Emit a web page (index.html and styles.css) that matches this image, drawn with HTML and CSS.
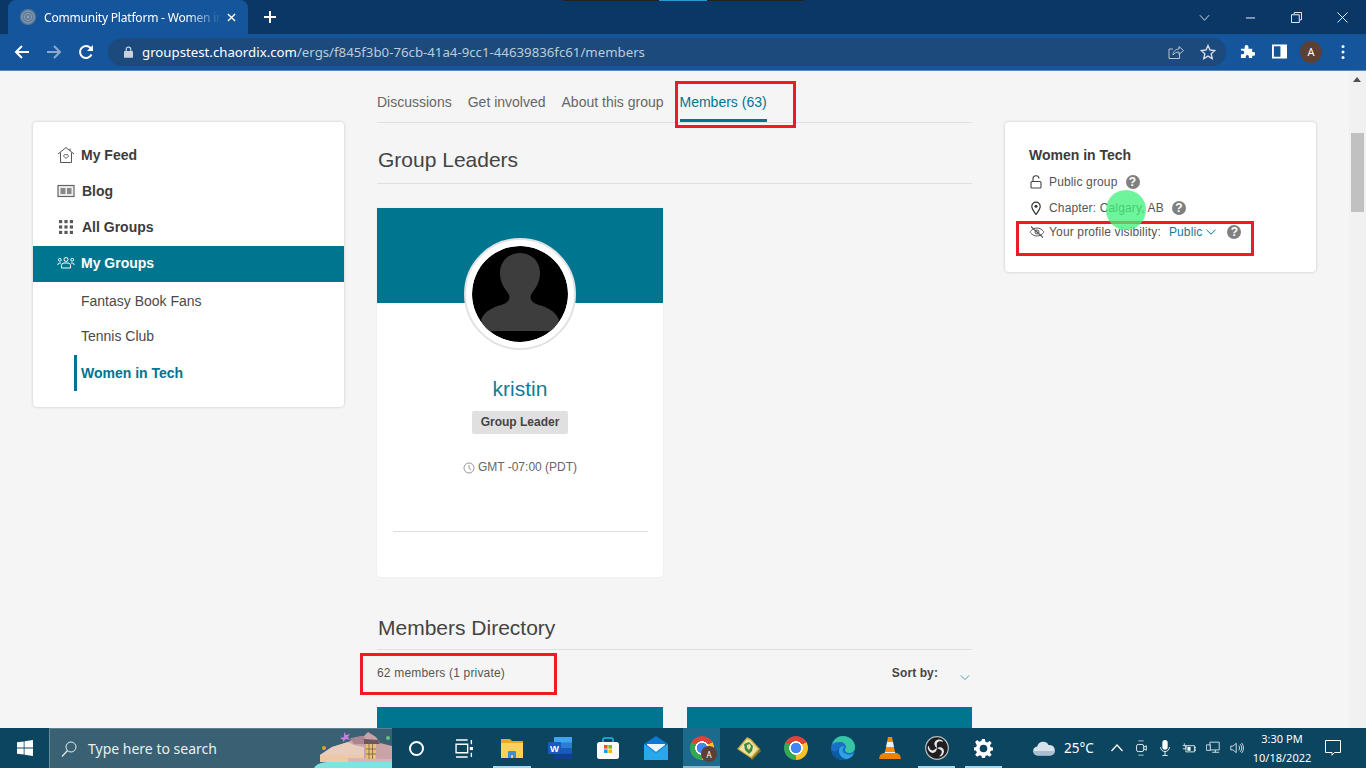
FILE: index.html
```html
<!DOCTYPE html>
<html lang="en">
<head>
<meta charset="utf-8">
<title>Community Platform - Women in Tech</title>
<link rel="stylesheet" href="styles.css">
</head>
<body>
<div class="recording-strip"><span class="rs-dark"></span><span class="rs-blue"></span><span class="rs-dark"></span></div>

<header class="tabstrip">
  <div class="tab">
    <svg class="favicon" viewBox="0 0 16 16"><circle cx="8" cy="8" r="8" fill="#5f7a97"/><circle cx="8" cy="8" r="6" fill="none" stroke="#8fa0b4" stroke-width="1"/><circle cx="8" cy="8" r="3.6" fill="none" stroke="#8fa0b4" stroke-width="1"/><circle cx="8" cy="8" r="1.4" fill="#8fa0b4"/></svg>
    <span class="tab-title">Community Platform - Women in</span>
    <svg class="tab-close" viewBox="0 0 10 10"><path d="M1 1l8 8M9 1l-8 8" stroke="#fff" stroke-width="1.5"/></svg>
  </div>
  <svg class="new-tab" viewBox="0 0 12 12"><path d="M6 0v12M0 6h12" stroke="#fff" stroke-width="2"/></svg>
  <div class="window-controls">
    <svg class="wc" viewBox="0 0 12 12"><path d="M1 3.500l5 5.500 5-5.500" fill="none" stroke="#dfe7ef" stroke-width="1"/></svg>
    <svg class="wc" viewBox="0 0 12 12"><path d="M1 6.500h10" stroke="#fff" stroke-width="1"/></svg>
    <svg class="wc" viewBox="0 0 12 12"><path d="M3.500 2.500V.5h8v8h-2M.5 3h8.500v8.500H.5z" fill="none" stroke="#fff" stroke-width="1"/></svg>
    <svg class="wc" viewBox="0 0 12 12"><path d="M.5.5l11 11M11.500.5l-11 11" stroke="#fff" stroke-width="1"/></svg>
  </div>
</header>

<nav class="toolbar">
  <svg class="nav-btn" viewBox="0 0 16 16"><path d="M15 8H2M8 2L2 8l6 6" fill="none" stroke="#fff" stroke-width="2"/></svg>
  <svg class="nav-btn" viewBox="0 0 16 16"><path d="M1 8h13M8 2l6 6-6 6" fill="none" stroke="#8eaaca" stroke-width="2"/></svg>
  <svg class="nav-btn" viewBox="0 0 16 16"><path d="M13.500 10.500A6 6 0 1 1 12.500 4L14 5.500" fill="none" stroke="#fff" stroke-width="2"/><path d="M15 1v6H9z" fill="#fff"/></svg>
  <div class="omnibox">
    <svg class="lock" viewBox="0 0 10 13"><path d="M2.500 6V3.500a2.500 2.500 0 0 1 5 0V6" fill="none" stroke="#c9d3de" stroke-width="1.300"/><rect y="5.500" width="10" height="7.500" rx="1" fill="#c9d3de"/></svg>
    <span class="url"><span class="url-host">groupstest.chaordix.com</span>/ergs/f845f3b0-76cb-41a4-9cc1-44639836fc61/members</span>
    <svg class="omni-icon" viewBox="0 0 16 16"><path d="M11.500 9.500v5H1V5h4" fill="none" stroke="#b9c5d3" stroke-width="1"/><path d="M5 11c0-4 3-6 6-6V2.500L15.500 6.500 11 10.500V8c-2.500 0-4.500 1-6 3z" fill="none" stroke="#b9c5d3" stroke-width="1"/></svg>
    <svg class="omni-icon star" viewBox="0 0 16 16"><path d="M8 1.500l2 4.500 4.800.500-3.600 3.200 1 4.800L8 12.100l-4.200 2.400 1-4.800L1.200 6.500 6 6z" fill="none" stroke="#d4dce5" stroke-width="1.400"/></svg>
  </div>
  <svg class="tool-icon" viewBox="0 0 16 16"><path d="M1 5h4V3a2 2 0 0 1 4 0v2h4v3.500h1.500a2 2 0 0 1 0 4H13V15H9.500v-1.500a1.700 1.700 0 0 0-3.400 0V15H1v-4h1.500a2 2 0 0 0 0-4H1z" fill="#fff"/></svg>
  <svg class="tool-icon" viewBox="0 0 16 16"><path d="M1 1.500h14v13H1z" fill="#14559c" stroke="#fff" stroke-width="2"/><rect x="9" y="1" width="6" height="14" fill="#fff"/></svg>
  <span class="profile">A</span>
  <svg class="menu-dots" viewBox="0 0 4 16"><circle cx="2" cy="2.500" r="1.500" fill="#fff"/><circle cx="2" cy="8" r="1.500" fill="#fff"/><circle cx="2" cy="13.500" r="1.500" fill="#fff"/></svg>
</nav>

<main class="page">
  <aside class="side-card">
    <a class="nav-row">
      <svg class="nav-ico" viewBox="0 0 18 18"><path d="M1 8l8-6.500L17 8M3.500 6.500V16.500h11V6.500M13 2.500V5" fill="none" stroke="#555" stroke-width="1"/><path d="M9 12.500L6.800 10.300a1.300 1.300 0 0 1 2.200-1.300 1.300 1.300 0 0 1 2.200 1.300z" fill="none" stroke="#555" stroke-width="1"/></svg>
      My Feed
    </a>
    <a class="nav-row nav-row-blog">
      <svg class="nav-ico" viewBox="0 0 18 18"><rect x="1" y="3.500" width="16" height="11" fill="#eee" stroke="#666" stroke-width="1.200"/><rect x="3.500" y="6" width="5" height="6" fill="#888"/><rect x="10" y="6" width="4.500" height="6" fill="#888"/></svg>
      Blog
    </a>
    <a class="nav-row nav-row-all">
      <svg class="nav-ico" viewBox="0 0 18 18"><g fill="#5a5a5a"><rect x="2" y="2" width="3.200" height="3.200"/><rect x="7.400" y="2" width="3.200" height="3.200"/><rect x="12.800" y="2" width="3.200" height="3.200"/><rect x="2" y="7.400" width="3.200" height="3.200"/><rect x="7.400" y="7.400" width="3.200" height="3.200"/><rect x="12.800" y="7.400" width="3.200" height="3.200"/><rect x="2" y="12.800" width="3.200" height="3.200"/><rect x="7.400" y="12.800" width="3.200" height="3.200"/><rect x="12.800" y="12.800" width="3.200" height="3.200"/></g></svg>
      All Groups
    </a>
    <a class="nav-row nav-row-active">
      <svg class="nav-ico" viewBox="0 0 18 18"><g fill="none" stroke="#fff" stroke-width="1"><circle cx="9" cy="5.500" r="2"/><circle cx="2.800" cy="5.800" r="1.400"/><circle cx="15.200" cy="5.800" r="1.400"/><path d="M4.500 14v-2.500a2.500 2.500 0 0 1 2.500-2.500h4a2.500 2.500 0 0 1 2.500 2.500V14zM.8 11a2 2 0 0 1 2-2H4M17.200 11a2 2 0 0 0-2-2H14"/></g></svg>
      My Groups
    </a>
    <a class="sub-row sub-row-first">Fantasy Book Fans</a>
    <a class="sub-row">Tennis Club</a>
    <a class="sub-row sub-row-active">Women in Tech</a>
  </aside>

  <section class="center">
    <div class="tabs">
      <a class="tab-link">Discussions</a>
      <a class="tab-link">Get involved</a>
      <a class="tab-link">About this group</a>
      <a class="tab-link tab-link-active">Members (63)</a>
    </div>
    <h2 class="section-title">Group Leaders</h2>
    <article class="member-card">
      <div class="banner"></div>
      <div class="avatar">
        <svg viewBox="0 0 96 96"><circle cx="48" cy="48" r="48" fill="#000"/><path d="M48 7c-11 0-20 8-20 20 0 9 4 15 8 20 3 5 1 9-4 11-10 3-19 6-23 16l5 11h68l5-11c-4-10-13-13-23-16-5-2-7-6-4-11 4-5 8-11 8-20 0-12-9-20-20-20z" fill="#3d3d3d"/></svg>
      </div>
      <div class="name">kristin</div>
      <div class="badge">Group Leader</div>
      <div class="timezone">
        <svg class="clock" viewBox="0 0 12 12"><circle cx="6" cy="6" r="5" fill="none" stroke="#999" stroke-width="1"/><path d="M6 3v3.300l2 1.400" fill="none" stroke="#999" stroke-width="1"/></svg>
        GMT -07:00 (PDT)
      </div>
      <div class="card-rule"></div>
    </article>
    <h2 class="section-title section-title-dir">Members Directory</h2>
    <div class="dir-bar">
      <span>62 members (1 private)</span>
      <span class="sort">Sort by:<svg class="sort-chev" viewBox="0 0 12 8"><path d="M1 1.500l5 5 5-5" fill="none" stroke="#4b9db5" stroke-width="1.200"/></svg></span>
    </div>
    <div class="dir-grid">
      <div class="dir-card"></div>
      <div class="dir-card"></div>
    </div>
  </section>

  <aside class="info-card">
    <h3 class="info-title">Women in Tech</h3>
    <div class="info-row info-row-public">
      <svg class="info-ico" viewBox="0 0 14 14"><path d="M4 6.500V4a3 3 0 0 1 6-.5" fill="none" stroke="#444" stroke-width="1.100"/><rect x="2" y="6.500" width="10" height="6.500" rx="1" fill="none" stroke="#444" stroke-width="1.100"/></svg>
      <span>Public group</span>
      <span class="help">?</span>
    </div>
    <div class="info-row info-row-chapter">
      <svg class="info-ico" viewBox="0 0 14 14"><path d="M7 13.500C4.500 10 2.800 8 2.800 5.300a4.200 4.200 0 0 1 8.400 0C11.200 8 9.500 10 7 13.500z" fill="none" stroke="#333" stroke-width="1.200"/><circle cx="7" cy="5.300" r="1.500" fill="#333"/></svg>
      <span>Chapter: Calgary, AB</span>
      <span class="help">?</span>
    </div>
    <div class="info-row info-row-vis">
      <svg class="info-ico info-ico-eye" viewBox="0 0 16 14"><path d="M1 7s2.500-4 7-4 7 4 7 4-2.500 4-7 4-7-4-7-4z" fill="none" stroke="#555" stroke-width="1"/><circle cx="8" cy="7" r="2" fill="none" stroke="#555" stroke-width="1"/><path d="M2 1.500l12 11" stroke="#555" stroke-width="1.100"/></svg>
      <span>Your profile visibility:</span>
      <span class="vis-val">Public<svg class="vis-chev" viewBox="0 0 10 6"><path d="M.5.8L5 5.200 9.500.8" fill="none" stroke="#00758f" stroke-width="1"/></svg></span>
      <span class="help">?</span>
    </div>
  </aside>

  <div class="scrollbar">
    <svg class="sb-arrow" viewBox="0 0 10 6"><path d="M5 0l5 6H0z" fill="#505050"/></svg>
    <div class="sb-thumb"></div>
  </div>

  <div class="mark mark-tab"></div>
  <div class="mark mark-vis"></div>
  <div class="mark mark-count"></div>
  <div class="click-dot"></div>
</main>

<footer class="taskbar">
  <div class="start">
    <svg viewBox="0 0 16 16" class="win"><path d="M0 2.300L6.700 1.400V7.600H0zM7.500 1.300L16 0V7.600H7.500zM0 8.400H6.700V14.600L0 13.700zM7.500 8.400H16V16L7.500 14.700z" fill="#fff"/></svg>
  </div>
  <div class="search">
    <svg class="search-ico" viewBox="0 0 16 16"><circle cx="10" cy="6" r="5" fill="none" stroke="#e6edf0" stroke-width="1"/><path d="M6.500 9.500L1 15.500" stroke="#e6edf0" stroke-width="1.200"/></svg>
    <span class="search-text">Type here to search</span>
    <svg class="search-art" viewBox="0 0 78 39">
      <path d="M0 39c2-4 8-6 16-6h62v6z" fill="#7fe3e4"/>
      <path d="M6 33V26L18 18 34 13 42 8 50 7 54 3 62 8 66 14 78 17V33z" fill="#c9a3a6"/>
      <path d="M18 18L34 13 40 16 50 18V26H6z" fill="#e8cdbd"/>
      <path d="M36 9L50 7 52 15 40 15z" fill="#a98792"/>
      <path d="M50 10L64 11 66 15H50z" fill="#6d5660"/>
      <path d="M6 26H50V33H6z" fill="#eec9a6"/>
      <path d="M34 29L78 30V33H34z" fill="#d9b0bd"/>
      <path d="M52 15H62V30H52z" fill="#e8c27a"/>
      <path d="M55 15V30M58.500 15V30M52 20H62M52 25H62" stroke="#6b5246" stroke-width=".7"/>
      <path d="M30 3l2 3 4-1-2 3 2 3-4-1-3 3V11L26 9l4-1z" fill="#c97be0"/>
      <circle cx="10" cy="19" r="2" fill="#e0a326"/>
      <circle cx="74" cy="9" r="2" fill="#5ac77c"/>
    </svg>
  </div>
  <div class="apps">
    <div class="app"><span class="cortana"></span></div>
    <div class="app">
      <svg class="app-ico-20" viewBox="0 0 18 18"><path d="M1 1h11M1 17h11M1 5h11v8H1z" fill="none" stroke="#fff" stroke-width="1.300"/><path d="M15.500 1v4M15.500 13v4" stroke="#fff" stroke-width="1.300"/><rect x="14" y="7.500" width="3" height="3" fill="#fff"/></svg>
    </div>
    <div class="app app-open">
      <svg class="app-ico" viewBox="0 0 24 24"><path d="M1 3h9l2 2h11v17H1z" fill="#e6a91f"/><path d="M1 7h22v15H1z" fill="#fbd35a"/><path d="M8 22v-6a1 1 0 0 1 1-1h6a1 1 0 0 1 1 1v6h-3v-3h-2v3z" fill="#3d8fd1"/></svg>
    </div>
    <div class="app">
      <svg class="app-ico" viewBox="0 0 24 24"><rect x="6" y="1" width="18" height="22" rx="1" fill="#2b7cd3"/><rect x="6" y="1" width="18" height="5.500" fill="#41a5ee"/><rect x="6" y="12" width="18" height="5.500" fill="#185abd"/><rect x="6" y="17.500" width="18" height="5.500" fill="#103f91"/><rect x="0" y="6" width="13" height="12" rx="1" fill="#185abd"/><text x="6.500" y="15.800" class="word-w">W</text></svg>
    </div>
    <div class="app">
      <svg class="app-ico" viewBox="0 0 24 24"><path d="M7 7V3.500A1.500 1.500 0 0 1 8.500 2h7A1.500 1.500 0 0 1 17 3.500V7" fill="none" stroke="#29b6e6" stroke-width="1.600"/><rect x="1" y="6" width="22" height="17" rx="2.500" fill="#fbfbfb"/><rect x="8" y="9" width="3.600" height="3.600" fill="#f25022"/><rect x="12.400" y="9" width="3.600" height="3.600" fill="#7fba00"/><rect x="8" y="13.400" width="3.600" height="3.600" fill="#00a4ef"/><rect x="12.400" y="13.400" width="3.600" height="3.600" fill="#ffb900"/></svg>
    </div>
    <div class="app">
      <svg class="app-ico" viewBox="0 0 24 24"><path d="M0 8l12-8 12 8v16H0z" fill="#0f78d4"/><path d="M0 8l12 9 12-9v16H0z" fill="#28a8ea"/><path d="M3 8h18v1l-9 7-9-7z" fill="#e9f6fd"/></svg>
    </div>
    <div class="app app-b app-active">
      <span class="chrome"></span>
      <span class="chrome-badge">A</span>
    </div>
    <div class="app app-b">
      <svg class="app-ico" viewBox="0 0 24 24"><path d="M0 13L10 1l4 2 9 10-8 10z" fill="#c9a93c"/><path d="M2 13L10 3l3 1 8 9-7 8z" fill="#efe3a0"/><path d="M7 8l5-2 4 4-1 5-3 3-4-4z" fill="#3c8a4a"/><path d="M10 9l3-1 1 3-2 3-2-2z" fill="#e8e0a0"/><path d="M14 23l9-10 1 2-9 9z" fill="#8a7420"/></svg>
    </div>
    <div class="app app-b"><span class="chrome"></span></div>
    <div class="app app-b">
      <svg class="app-ico" viewBox="0 0 24 24"><circle cx="12" cy="12" r="12" fill="#1a6fc4"/><path d="M1 9C3 3 7 0 12 0c7 0 12 5 12 11 0 4-3 6-6 6-2 0-4-1-4-3 0-1 1-2 1-3 0-3-3-5-6-5C5 6 2 7 1 9z" fill="#37c6a4"/><path d="M8 13c0 5 3 9 8 10-1 .7-3 1-4 1C5 24 0 19 0 12c2 6 5 3 8 1z" fill="#0c59a4"/><path d="M13 10c-3 0-5 2-5 5 0 4 3 8 8 8 4-1 6-3 7-6-2 2-5 2-8 1-3-1-4-3-3-5 .3-1 1-2 1-3z" fill="#2ea3e3"/></svg>
    </div>
    <div class="app app-b">
      <svg class="app-ico" viewBox="0 0 24 24"><path d="M10 1h4l1 5H9z" fill="#ff8800"/><path d="M9 6h6l1 5H8z" fill="#f2f2f2"/><path d="M8 11h8l1 5H7z" fill="#ff8800"/><path d="M7 16h10l1 3H6z" fill="#f2f2f2"/><path d="M2 19l3-2h14l3 2 1 4H1z" fill="#f08000"/></svg>
    </div>
    <div class="app app-b app-open">
      <svg class="app-ico" viewBox="0 0 24 24"><circle cx="12" cy="12" r="11.300" fill="#1f1f22" stroke="#b7bcbf" stroke-width="1.200"/><g fill="#e8e8e8"><path d="M12 12C9 10 8 6 12 4c3-1 6 0 6 2-2-1-5-1-6 1-.5 1 0 3 0 5z"/><path d="M12 12C9 10 8 6 12 4c3-1 6 0 6 2-2-1-5-1-6 1-.5 1 0 3 0 5z" transform="rotate(120 12 12)"/><path d="M12 12C9 10 8 6 12 4c3-1 6 0 6 2-2-1-5-1-6 1-.5 1 0 3 0 5z" transform="rotate(240 12 12)"/></g></svg>
    </div>
    <div class="app app-b app-open">
      <svg class="app-ico-20" viewBox="0 0 20 20"><path d="M8.500 0h3l.5 3 2 .8 2.500-1.800 2.100 2.100L16.800 6.600l.8 2 2.400.4v3l-2.400.4-.8 2 1.800 2.300-2.100 2.100-2.500-1.800-2 .8-.5 3h-3l-.5-3-2-.8L3.300 18.700 1.200 16.600 3 14.300l-.8-2-2.200-.4v-3l2.200-.4.800-2L1.200 3.100 3.300 1l2.300 1.800 2-.8z" fill="#fff"/><circle cx="10" cy="10" r="4" fill="#0b4560"/></svg>
    </div>
  </div>
  <div class="tray">
    <svg class="cloud" viewBox="0 0 24 16"><path d="M6 15.500a4.500 4.500 0 0 1-.7-9A6 6 0 0 1 16.500 5a5.300 5.300 0 0 1 2 10.500z" fill="#d7e2ea"/><path d="M1.500 11h21.500a5 5 0 0 1-4.500 4.500H6A5 5 0 0 1 1.500 11z" fill="#a9bfd0"/></svg>
    <span class="temp">25°C</span>
    <svg class="tray-ico tray-caret" viewBox="0 0 14 14"><path d="M1.500 10L7 4l5.500 6" fill="none" stroke="#fff" stroke-width="1.200"/></svg>
    <svg class="tray-ico" viewBox="0 0 14 18"><path d="M4 1h6M4 17h6" stroke="#c8d4da" stroke-width="1"/><rect x="2" y="5" width="8" height="8" rx="2" fill="none" stroke="#fff" stroke-width="1"/><path d="M10 8l3-1.500v5L10 10" fill="none" stroke="#fff" stroke-width="1"/></svg>
    <svg class="tray-ico" viewBox="0 0 14 18"><rect x="4" y="0" width="6" height="11" rx="3" fill="#fff"/><path d="M2 8a5 5 0 0 0 10 0M7 13v4M4 17.500h6" fill="none" stroke="#fff" stroke-width="1"/></svg>
    <svg class="tray-ico" viewBox="0 0 18 14"><path d="M5 4h11v8H5zM16 6h2v4h-2M1 8h4M3 1v3M1 4h4v4" fill="none" stroke="#fff" stroke-width="1"/><rect x="7" y="5.500" width="4" height="5" fill="#fff"/></svg>
    <svg class="tray-ico" viewBox="0 0 18 16"><path d="M5 .5h12v10H5zM8 13.500h9M12 10.500v3" fill="none" stroke="#fff" stroke-width="1"/><path d="M.5 4h5v7h-5z" fill="#0b4560" stroke="#fff" stroke-width="1"/></svg>
    <svg class="tray-ico" viewBox="0 0 18 16"><path d="M1 5.500h3L8 2v12L4 10.500H1zM11 5a4 4 0 0 1 0 6M13 3a7 7 0 0 1 0 10M15 1.500a10 10 0 0 1 0 13" fill="none" stroke="#fff" stroke-width="1"/></svg>
    <div class="clock-time"><span>3:30 PM</span><span>10/18/2022</span></div>
    <svg class="notify" viewBox="0 0 16 16"><path d="M.5.500h15v12h-6L7 15.200V12.500H.5z" fill="none" stroke="#fff" stroke-width="1"/></svg>
  </div>
</footer>
</body>
</html>
```
FILE: styles.css
```css
* { box-sizing: border-box; }
html, body { margin: 0; padding: 0; height: 100%; overflow: hidden; }
body {
  width: 1366px; height: 768px; position: relative;
  display: flex; flex-direction: column;
  font-family: "Liberation Sans", Arial, sans-serif;
  background: #f5f5f5; color: #444;
}
a { color: inherit; text-decoration: none; }
h2, h3 { margin: 0; font-weight: normal; }

.recording-strip { position: absolute; top: 0; left: 563px; display: flex; height: 1px; z-index: 3; }
.rs-dark { width: 96px; background: #222; }
.rs-dark:last-child { width: 97px; }
.rs-blue { width: 48px; background: #2b95d6; }

/* Browser chrome */
.tabstrip { height: 34px; flex: none; background: #0b3766; display: flex; align-items: center; position: relative; }
.tab {
  margin-left: 8px; width: 240px; height: 34px; background: #14559c; flex: none;
  border-radius: 8px 8px 0 0; display: flex; align-items: center; padding-left: 12px;
}
.favicon { width: 16px; height: 16px; flex: none; }
.tab-title {
  margin-left: 8px; width: 183px; white-space: nowrap;
  font: 12px "Noto Sans", sans-serif; letter-spacing: -.2px; color: #fff;
  -webkit-mask-image: linear-gradient(to right, #000 78%, transparent 97%);
  mask-image: linear-gradient(to right, #000 78%, transparent 97%);
}
.tab-close { width: 9px; height: 9px; flex: none; }
.new-tab { width: 12px; height: 12px; margin-left: 16px; }
.window-controls { margin-left: auto; display: flex; align-items: center; gap: 35px; height: 34px; padding-right: 18px; }
.wc { width: 11px; height: 11px; }

.toolbar { height: 37px; flex: none; background: #14559c; border-bottom: 1px solid #5c88bb; display: flex; align-items: center; padding-bottom: 1px; }
.nav-btn { width: 16px; height: 16px; margin-left: 14px; margin-right: 2px; }
.omnibox {
  margin-left: 12px; width: 1118px; height: 28px; border-radius: 14px; background: #1c4a7c; flex: none;
  display: flex; align-items: center; padding-left: 16px;
}
.lock { width: 9px; height: 12px; flex: none; }
.url { margin-left: 9px; font: 13.240px "Noto Sans", sans-serif; color: #bccad9; white-space: nowrap; }
.url-host { color: #fff; }
.omni-icon { width: 16px; height: 16px; flex: none; margin-left: auto; }
.star { margin-left: 16px; margin-right: 10px; }
.tool-icon { width: 15px; height: 15px; margin-left: 14px; flex: none; }
.tool-icon + .tool-icon { margin-left: 17px; }
.profile {
  margin-left: 13px; width: 22px; height: 22px; border-radius: 50%; background: #5c4033; flex: none;
  color: #fff; font: 11px "Noto Sans", sans-serif; display: flex; align-items: center; justify-content: center;
}
.menu-dots { width: 4px; height: 16px; margin-left: 19px; flex: none; }

/* Page */
.page { flex: none; height: 657px; display: flex; align-items: flex-start; position: relative; overflow: hidden; background: #f5f5f5; }
.side-card {
  margin: 51px 0 0 33px; width: 311px; height: 285px; padding-top: 15px; flex: none;
  background: #fff; border-radius: 4px; box-shadow: 0 0 3px rgba(0,0,0,.2);
}
.nav-row { height: 36px; display: flex; align-items: center; padding-left: 24px; font-size: 14px; font-weight: bold; color: #3c3c3c; }
.nav-row-active { background: #00758f; color: #fff; margin-top: 1px; padding-bottom: 2px; }
.nav-ico { width: 18px; height: 18px; margin-right: 6px; flex: none; }
.nav-row-blog .nav-ico { margin-right: 7px; }
.nav-row-all .nav-ico { margin-right: 7px; }
.sub-row { height: 35px; display: flex; align-items: center; padding-left: 48px; font-size: 14px; color: #4a4a4a; }
.sub-row-first { margin-top: 1.500px; }
.sub-row-active { height: 36px; margin-left: 41px; padding-left: 4px; border-left: 3px solid #00758f; color: #00758f; font-weight: bold; margin-top: 1.500px; }

.center { margin-left: 33px; width: 595px; flex: none; }
.tabs { height: 52px; border-bottom: 1px solid #e0e0e0; display: flex; gap: 16px; align-items: flex-end; }
.tab-link { height: 50px; padding-top: 22px; font-size: 14px; color: #666; }
.tab-link-active { color: #00758f; border-bottom: 3px solid #00758f; }
.section-title { font-size: 21px; color: #444; height: 61px; padding: 24px 0 0 1px; line-height: 26px; border-bottom: 1px solid #dfdfdf; }
.section-title-dir { margin-top: 26px; height: 47px; padding-top: 12px; }

.member-card {
  margin-top: 24px; width: 286px; height: 369px; background: #fff; position: relative;
  box-shadow: 0 0 2px rgba(0,0,0,.08); text-align: center; border-radius: 0 0 4px 4px;
}
.banner { height: 95px; background: #00758f; }
.avatar {
  position: absolute; left: 87px; top: 30px; width: 112px; height: 112px; border-radius: 50%;
  background: #fff; border: 2px solid #e2e2e2; padding: 6px;
}
.avatar svg { width: 96px; height: 96px; display: block; border-radius: 50%; }
.name { margin-top: 72px; font-size: 21px; line-height: 28px; color: #0f7c98; }
.badge {
  margin: 8px auto 0; width: 96px; height: 23px; line-height: 22px; background: #e0e0e0; border-radius: 2px;
  font-size: 12px; font-weight: bold; color: #444;
}
.timezone { margin-top: 26px; font-size: 12px; line-height: 14px; color: #666; display: flex; justify-content: center; align-items: center; gap: 3px; }
.clock { width: 12px; height: 12px; margin-top: 2px; }
.card-rule { margin: 57px 15px 0 16px; border-top: 1px solid #ddd; }

.dir-bar { height: 57px; display: flex; justify-content: space-between; font-size: 12px; letter-spacing: .18px; color: #555; padding-top: 16px; }
.sort { font-weight: bold; color: #444; position: relative; padding-right: 34px; letter-spacing: .1px; }
.sort-chev { position: absolute; right: 2px; top: 8px; width: 10px; height: 7px; }
.dir-grid { display: flex; gap: 24px; }
.dir-card { width: 286px; height: 100px; background: #00758f; }
.dir-card:last-child { width: 285px; }

.info-card {
  margin: 51px 0 0 33px; width: 311px; height: 150px; padding: 25px 24px 0 24px; flex: none;
  background: #fff; border-radius: 4px; box-shadow: 0 0 3px rgba(0,0,0,.2);
}
.info-title { font-size: 14px; font-weight: bold; color: #3c3c3c; line-height: 16px; }
.info-row { display: flex; align-items: center; font-size: 12px; letter-spacing: .15px; color: #555; height: 16px; }
.info-row-public { margin-top: 11px; }
.info-row-chapter { margin-top: 10px; }
.info-row-vis { margin-top: 8px; }
.info-ico { width: 14px; height: 14px; margin-right: 6px; flex: none; }
.info-ico-eye { width: 16px; margin-right: 4px; }
.help {
  width: 14px; height: 14px; border-radius: 50%; background: #808080; color: #fff;
  font-size: 12px; font-weight: bold; line-height: 14px; text-align: center; margin-left: 8px; flex: none; letter-spacing: 0;
}
.vis-val { color: #0f7c98; margin-left: 8px; display: flex; align-items: center; }
.vis-chev { width: 10px; height: 6px; margin-left: 4px; }
.vis-val + .help { margin-left: 11px; }

.scrollbar { margin-left: auto; width: 17px; height: 657px; background: #f1f1f1; position: relative; flex: none; }
.sb-arrow { position: absolute; left: 4px; top: 6px; width: 8px; height: 5px; }
.sb-thumb { position: absolute; left: 2px; top: 62px; width: 13px; height: 79px; background: #c1c1c1; }

.mark { position: absolute; border: 3px solid #ed1c24; pointer-events: none; }
.mark-tab { left: 675px; top: 10px; width: 121px; height: 47px; }
.mark-vis { left: 1016px; top: 150px; width: 238px; height: 35px; }
.mark-count { left: 360px; top: 582px; width: 197px; height: 42px; }
.click-dot { position: absolute; left: 1106px; top: 119px; width: 40px; height: 40px; border-radius: 50%; background: rgba(61,241,123,.75); }

/* Windows taskbar */
.taskbar { height: 40px; flex: none; background: #0b4560; display: flex; align-items: stretch; }
.start { width: 49px; display: flex; align-items: center; justify-content: center; flex: none; }
.win { width: 16px; height: 16px; }
.search {
  width: 343px; flex: none; background: #3a6073; border-top: 1px solid #5f7f8e; border-left: 1px solid #6d8b99;
  display: flex; align-items: center; position: relative; overflow: hidden;
}
.search-ico { width: 16px; height: 16px; margin-left: 11px; }
.search-text { margin-left: 11px; font: 14px "Noto Sans", sans-serif; color: #e9eff2; }
.search-art { position: absolute; right: 0; bottom: 0; width: 78px; height: 39px; }
.apps { display: flex; flex: none; }
.app { width: 48px; flex: none; display: flex; align-items: center; justify-content: center; position: relative; }
.app-b { width: 47px; }
.app-ico { width: 24px; height: 24px; position: relative; }
.app-ico-20 { width: 19px; height: 19px; }
.app-open::after { content: ""; position: absolute; left: 5px; right: 5px; bottom: 0; height: 2px; background: #a6d8ec; }
.app-active { margin-left: -2px; }
.app-active::before { content: ""; position: absolute; left: 5px; width: 37px; top: 0; bottom: 0; background: #1c6a8c; border-bottom: 2px solid #8ab8c8; }
.cortana { width: 15px; height: 15px; border-radius: 50%; border: 2px solid #fff; }
.word-w { font: bold 9.500px "Liberation Sans", sans-serif; fill: #fff; text-anchor: middle; }
.chrome {
  width: 24px; height: 24px; border-radius: 50%; display: block; position: relative;
  background:
    radial-gradient(circle, #4285f4 0 5px, #fff 5.400px 6.600px, transparent 7px),
    conic-gradient(from 300deg, #dc4437 0 120deg, #fbc02d 120deg 240deg, #36a852 240deg 360deg);
}
.chrome-badge {
  position: absolute; left: 23px; top: 18px; width: 16px; height: 16px; border-radius: 50%; background: #5c4033;
  color: #fff; font: 8px "Noto Sans", sans-serif; display: flex; align-items: center; justify-content: center;
}
.tray { flex: 1; display: flex; align-items: center; position: relative; }
.cloud { width: 24px; height: 16px; margin-left: 25px; flex: none; }
.temp { margin-left: 8px; font: 13.500px "Noto Sans", sans-serif; color: #fff; width: 30px; white-space: nowrap; }
.tray-ico { width: 14px; height: 16px; margin-left: 10px; flex: none; }
.tray-caret { margin-left: 16px; }
.clock-time { width: 58px; margin-left: 9px; flex: none; display: flex; flex-direction: column; align-items: center; font: 11px/19px "Noto Sans", sans-serif; color: #fff; }
.notify { width: 16px; height: 16px; margin-left: 14px; flex: none; }
```
